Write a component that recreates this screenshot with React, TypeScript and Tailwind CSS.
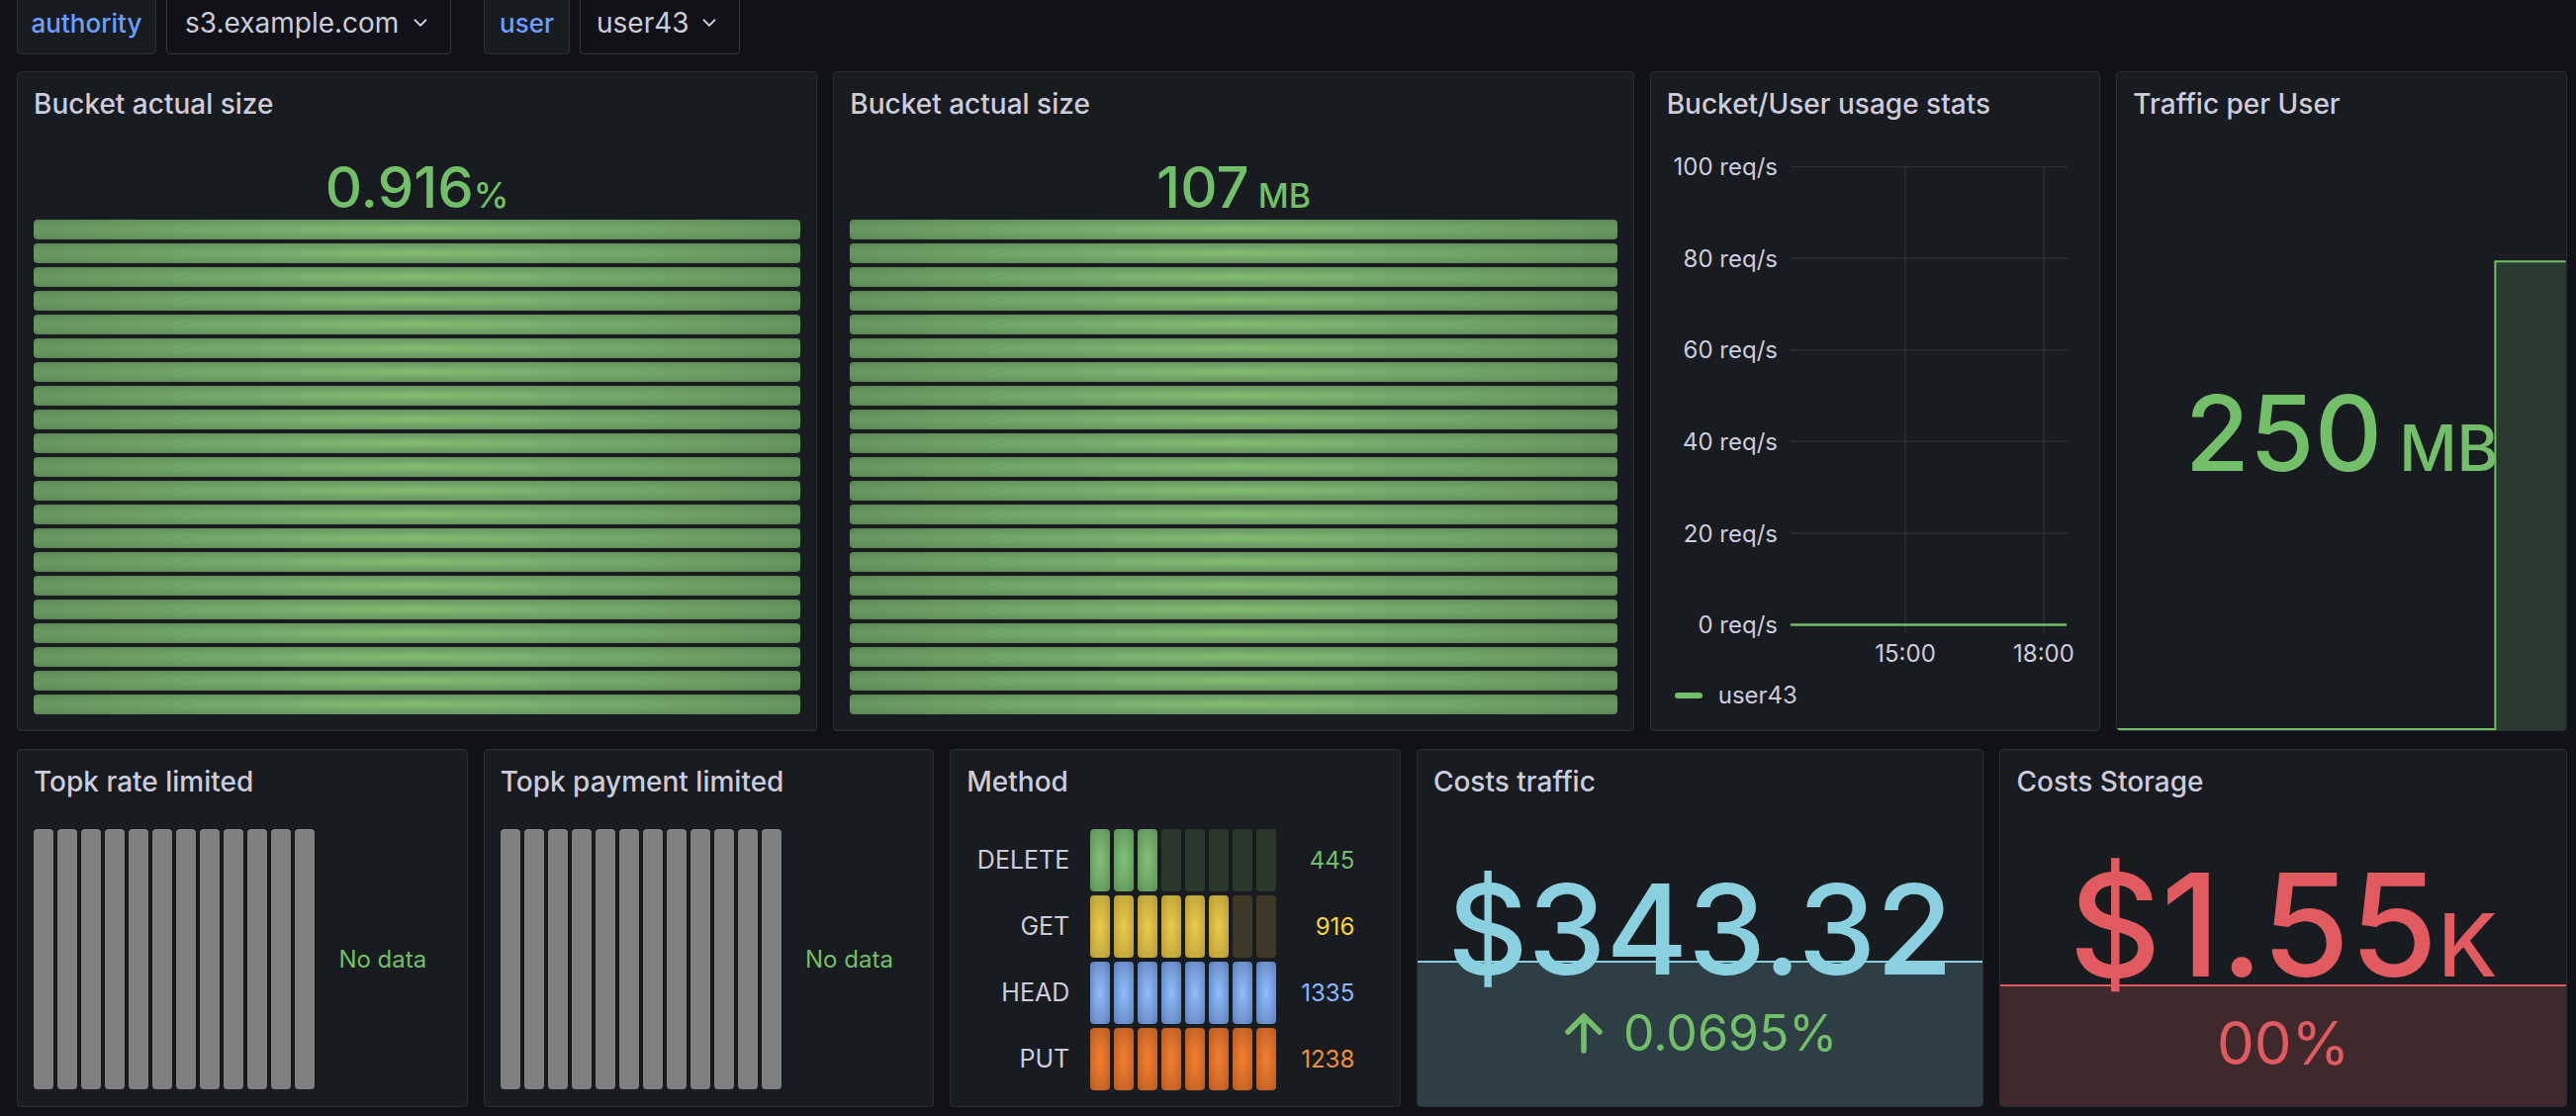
import React from "react";

interface MethodRow {
  name: string;
  value: number;
  lit: number;
  litCls: string;
  dimCls: string;
  textCls: string;
}

const methods: MethodRow[] = [
  {
    name: "DELETE",
    value: 445,
    lit: 3,
    litCls: "bg-[radial-gradient(ellipse_at_center,#82c277_0%,#5e9158_100%)]",
    dimCls: "bg-[#2b392c]",
    textCls: "text-[#73bf69]",
  },
  {
    name: "GET",
    value: 916,
    lit: 6,
    litCls: "bg-[radial-gradient(ellipse_at_center,#edcb4b_0%,#b59b34_100%)]",
    dimCls: "bg-[#3d3828]",
    textCls: "text-[#f5d43a]",
  },
  {
    name: "HEAD",
    value: 1335,
    lit: 8,
    litCls: "bg-[radial-gradient(ellipse_at_center,#93bcff_0%,#5c7fb8_100%)]",
    dimCls: "bg-[#283446]",
    textCls: "text-[#8ab8ff]",
  },
  {
    name: "PUT",
    value: 1238,
    lit: 8,
    litCls: "bg-[radial-gradient(ellipse_at_center,#f47f30_0%,#b95a22_100%)]",
    dimCls: "bg-[#41301f]",
    textCls: "text-[#f5903a]",
  },
];

function ChevronDown() {
  return (
    <svg
      width="22"
      height="22"
      viewBox="0 0 24 24"
      fill="none"
      stroke="currentColor"
      strokeWidth="2"
      strokeLinecap="round"
      strokeLinejoin="round"
    >
      <path d="m6 9 6 6 6-6" />
    </svg>
  );
}

function ArrowUp() {
  return (
    <svg width="42" height="42" viewBox="0 0 42 42" fill="none" stroke="currentColor" strokeWidth="5.5" strokeLinecap="round" strokeLinejoin="round">
      <path d="M21 39V5" />
      <path d="M5 20 21 4l16 16" />
    </svg>
  );
}

function TopBar() {
  return (
    <div className="-mt-[9px] flex h-16 pl-[17px]">
      <div className="flex w-[141px] items-center justify-center rounded-[4px] border border-[#2d2f35] bg-[#181b1f] text-[26px] font-medium text-[#6e9fff]">
        authority
      </div>
      <div className="ml-[10px] flex w-[288px] items-center justify-between rounded-[4px] border border-[#34363c] bg-[#111217] pl-[18px] pr-[19px] text-[28px] text-[#ccccdc]">
        <span>s3.example.com</span>
        <ChevronDown />
      </div>
      <div className="ml-[33px] flex w-[87px] items-center justify-center rounded-[4px] border border-[#2d2f35] bg-[#181b1f] text-[26px] font-medium text-[#6e9fff]">
        user
      </div>
      <div className="ml-[10px] flex w-[162px] items-center justify-between rounded-[4px] border border-[#34363c] bg-[#111217] pl-4 pr-[19px] text-[28px] text-[#ccccdc]">
        <span>user43</span>
        <ChevronDown />
      </div>
    </div>
  );
}

function Panel({
  title,
  className,
  children,
}: {
  title: string;
  className: string;
  children?: React.ReactNode;
}) {
  return (
    <section
      className={`relative flex flex-col overflow-hidden rounded-[4px] border border-[#2a2d33] bg-[#181b1f] ${className}`}
    >
      <header className="relative flex h-16 shrink-0 items-center px-4 text-[28px] font-medium text-[#ccccdc]">
        {title}
      </header>
      {children}
    </section>
  );
}

// LCD style bar gauge, all cells filled
function LcdStack({ value, unit }: { value: string; unit: React.ReactNode }) {
  return (
    <div className="flex flex-col px-4">
      <div className="mt-[23px] h-[58px] text-center text-[58px] font-medium leading-none text-[#73bf69]">
        {value}
        {unit}
      </div>
      <div className="mt-1 flex flex-col gap-1">
        {Array.from({ length: 21 }).map((_, i) => (
          <div
            key={i}
            className="h-5 rounded-[4px] bg-[radial-gradient(ellipse_at_center,#80bb74_0%,#6d9f64_55%,#5b8655_100%)]"
          />
        ))}
      </div>
    </div>
  );
}

function UsageChart() {
  // top offset leaves room for the first label's ascent
  const top = 18.5;
  const ys = [0, 1, 2, 3, 4, 5].map((k) => top + k * 92.6);
  const labels = ["100 req/s", "80 req/s", "60 req/s", "40 req/s", "20 req/s", "0 req/s"];
  return (
    <svg width="437" height="530" className="mt-[13px] shrink-0" fontFamily="Inter, sans-serif">
      {ys.map((y) => (
        <line key={y} x1="141" x2="421" y1={y} y2={y} stroke="#2b2e33" strokeWidth="1.5" />
      ))}
      <line x1="257" x2="257" y1={top} y2="490" stroke="#2b2e33" strokeWidth="1.5" />
      <line x1="397" x2="397" y1={top} y2="490" stroke="#2b2e33" strokeWidth="1.5" />
      {labels.map((t, i) => (
        <text key={t} x="128" y={ys[i] + 8.7} textAnchor="end" fontSize="24" fill="#ccccdc">
          {t}
        </text>
      ))}
      <line x1="141" x2="420" y1={ys[5]} y2={ys[5]} stroke="#73bf69" strokeWidth="2.5" />
      <text x="257" y="518.7" textAnchor="middle" fontSize="24" fill="#ccccdc">
        15:00
      </text>
      <text x="397" y="518.7" textAnchor="middle" fontSize="24" fill="#ccccdc">
        18:00
      </text>
    </svg>
  );
}

function EmptyGauge() {
  return (
    <div className="mt-4 flex px-4">
      <div className="flex gap-1">
        {Array.from({ length: 12 }).map((_, i) => (
          <div key={i} className="h-[263px] w-5 rounded-[4px] bg-[#808080]" />
        ))}
      </div>
      <div className="flex flex-1 items-center justify-center text-[24px] text-[#73bf69]">No data</div>
    </div>
  );
}

function MethodGauge() {
  return (
    <div className="mt-4 flex flex-col gap-1 px-4">
      {methods.map((m) => (
        <div key={m.name} className="flex h-[63px] items-center">
          <div className="w-[104px] text-right text-[25px] text-[#ccccdc]">{m.name}</div>
          <div className="ml-[21px] flex h-full gap-1">
            {Array.from({ length: 8 }).map((_, i) => (
              <div key={i} className={`h-full w-5 rounded-[4px] ${i < m.lit ? m.litCls : m.dimCls}`} />
            ))}
          </div>
          <div className={`w-[79px] text-right text-[24px] ${m.textCls}`}>{m.value}</div>
        </div>
      ))}
    </div>
  );
}

export default function App() {
  return (
    <div className="h-[1128px] w-[2604px] overflow-hidden bg-[#111217] font-[Inter,sans-serif] antialiased">
      <TopBar />
      <main className="mt-[17px] grid grid-cols-[repeat(22,minmax(0,1fr))] grid-rows-[667px_362px] gap-x-4 gap-y-[18px] pl-[17px] pr-[9px]">
        <Panel title="Bucket actual size" className="col-span-7">
          <LcdStack value="0.916" unit={<span className="text-[36px]">%</span>} />
        </Panel>
        <Panel title="Bucket actual size" className="col-span-7">
          <LcdStack value="107" unit={<span className="text-[34px]"> MB</span>} />
        </Panel>
        <Panel title="Bucket/User usage stats" className="col-span-4">
          <UsageChart />
          <div className="ml-6 mt-[11px] flex h-6 items-center gap-4 text-[24px] text-[#ccccdc]">
            <span className="h-[6px] w-7 rounded-full bg-[#73bf69]" />
            user43
          </div>
        </Panel>
        <Panel title="Traffic per User" className="col-span-4">
          <svg
            className="absolute inset-x-0 bottom-0 top-16 h-[calc(100%-64px)] w-full"
            viewBox="0 0 452 600"
            preserveAspectRatio="none"
          >
            <path d="M381 127H452V600H381Z" fill="#2a3a2e" />
            <polyline
              points="0,599 381,599 381,127 452,127"
              fill="none"
              stroke="#73bf69"
              strokeWidth="2"
              vectorEffect="non-scaling-stroke"
            />
          </svg>
          <div className="relative flex flex-1 items-center justify-center text-[106px] font-medium leading-none text-[#73bf69]">
            <span>
              250<span className="text-[64px]"> MB</span>
            </span>
          </div>
        </Panel>

        <Panel title="Topk rate limited" className="col-span-4">
          <EmptyGauge />
        </Panel>
        <Panel title="Topk payment limited" className="col-span-4">
          <EmptyGauge />
        </Panel>
        <Panel title="Method" className="col-span-4">
          <MethodGauge />
        </Panel>
        <Panel title="Costs traffic" className="col-span-5">
          <div className="absolute inset-x-0 bottom-0 top-[213px] border-t-2 border-[#8ad0e0] bg-[#2e3e45]" />
          <div className="relative mt-[54px] flex flex-col items-center">
            <div className="h-[126px] text-[126px] font-medium leading-none text-[#8ad0e0]">$343.32</div>
            <div className="mt-[17px] flex h-[50px] items-center gap-[19px] text-[50px] leading-none text-[#73bf69]">
              <ArrowUp />
              <span>0.0695%</span>
            </div>
          </div>
        </Panel>
        <Panel title="Costs Storage" className="col-span-5">
          <div className="absolute inset-x-0 bottom-0 top-[237px] border-t-2 border-[#e05a60] bg-[#40292d]" />
          <div className="relative mt-[41px] flex flex-col items-center">
            <div className="h-[144px] text-[144px] font-medium leading-none text-[#e05a60]">
              $1.55<span className="text-[88px]">K</span>
            </div>
            <div className="mt-[17px] h-[60px] text-[60px] leading-none text-[#e05a60]">00%</div>
          </div>
        </Panel>
      </main>
    </div>
  );
}
